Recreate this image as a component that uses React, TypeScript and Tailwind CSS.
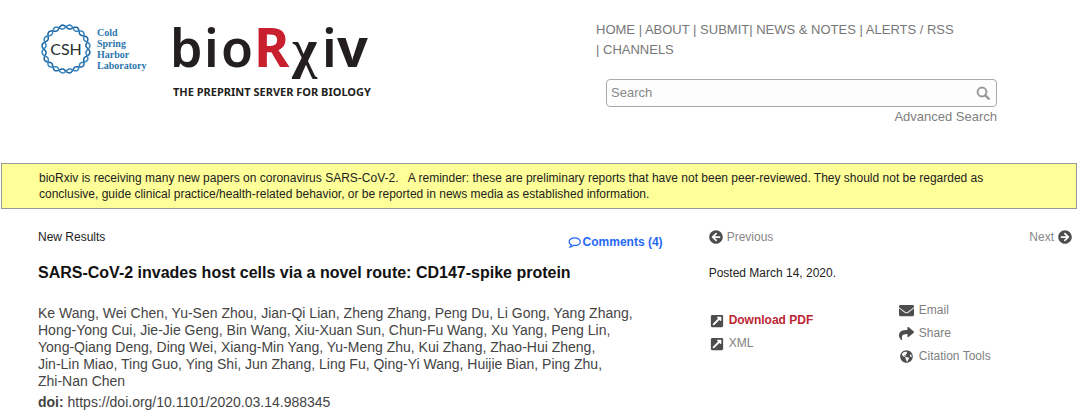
import type { ReactNode } from "react";
import {
  FaArrowCircleLeft,
  FaArrowCircleRight,
  FaEnvelope,
  FaExternalLinkSquareAlt,
  FaGlobeAmericas,
  FaShare,
} from "react-icons/fa";

const navItems = ["HOME", "ABOUT", "SUBMIT", "NEWS & NOTES", "ALERTS / RSS", "CHANNELS"];

const authors = [
  "Ke Wang", "Wei Chen", "Yu-Sen Zhou", "Jian-Qi Lian", "Zheng Zhang", "Peng Du", "Li Gong", "Yang Zhang",
  "Hong-Yong Cui", "Jie-Jie Geng", "Bin Wang", "Xiu-Xuan Sun", "Chun-Fu Wang", "Xu Yang", "Peng Lin",
  "Yong-Qiang Deng", "Ding Wei", "Xiang-Min Yang", "Yu-Meng Zhu", "Kui Zhang", "Zhao-Hui Zheng",
  "Jin-Lin Miao", "Ting Guo", "Ying Shi", "Jun Zhang", "Ling Fu", "Qing-Yi Wang", "Huijie Bian", "Ping Zhu",
  "Zhi-Nan Chen",
];

// One strand of the helix ring, a sine wave wrapped around a circle
function strand(phase: number) {
  const points: string[] = [];
  for (let i = 0; i <= 360; i += 2) {
    const a = (i * Math.PI) / 180;
    const r = 22.2 + 2 * Math.sin(10 * a + phase);
    points.push(`${(25 + r * Math.cos(a)).toFixed(2)} ${(25 + r * Math.sin(a)).toFixed(2)}`);
  }
  return `M${points.join("L")}Z`;
}

function LabLogo() {
  return (
    <a href="#cshl" aria-label="Cold Spring Harbor Laboratory" className="block pt-5">
      <svg width="106" height="50" viewBox="0 0 106 50">
        <path d={strand(0)} fill="none" stroke="#1c639f" strokeWidth="1.5" />
        <path d={strand(Math.PI)} fill="none" stroke="#3584bd" strokeWidth="1.5" />
        <text x="25" y="31" textAnchor="middle" fontSize="16" fill="#26302f" className="font-['Lato',sans-serif]">
          CSH
        </text>
        <g fontSize="10" fontWeight="700" fill="#2c76ad" className="font-['Liberation_Serif',serif]">
          <text x="56" y="12">Cold</text>
          <text x="56" y="23">Spring</text>
          <text x="56" y="34">Harbor</text>
          <text x="56" y="45">Laboratory</text>
        </g>
      </svg>
    </a>
  );
}

function SiteLogo() {
  return (
    <a href="#home" aria-label="bioRxiv home" className="block">
      <svg width="210" height="100" viewBox="0 0 210 100">
        <g fontSize="52" fontWeight="600" fill="#231f20" className="font-['Noto_Sans',sans-serif]">
          <text x="1" y="63">b</text>
          <text x="35" y="63">i</text>
          <text x="52" y="63">o</text>
          <text x="85" y="63" fill="#c8202f" fontSize="54" fontWeight="700">R</text>
          <text x="153" y="63">i</text>
          <text x="168" y="63" fontSize="54" fontWeight="700">v</text>
        </g>
        <text x="123" y="63" fontSize="54" fontWeight="700" fill="#231f20" className="font-['Liberation_Serif',serif]">
          χ
        </text>
        <text x="4" y="92" fontSize="11" fontWeight="700" fill="#231f20" className="font-['Noto_Sans',sans-serif]">
          THE PREPRINT SERVER FOR BIOLOGY
        </text>
      </svg>
    </a>
  );
}

function CommentIcon() {
  return (
    <svg width="13" height="13" viewBox="0 0 14 14" fill="none" stroke="currentColor" strokeWidth="1.4">
      <path d="M7.2 2C3.8 2 1.2 3.7 1.2 6.1c0 1.5 1 2.7 2.5 3.5-.2.9-.7 1.6-1.3 2.2 1.4-.2 2.5-.8 3.4-1.7.4.1.9.1 1.4.1 3.4 0 6-1.7 6-4.1S10.6 2 7.2 2Z" />
    </svg>
  );
}

function SearchIcon() {
  return (
    <svg width="14" height="14" viewBox="0 0 14 14" fill="none" stroke="currentColor">
      <circle cx="6" cy="6" r="4.4" strokeWidth="2" />
      <path d="m9.3 9.3 3.4 3.4" strokeWidth="2.4" strokeLinecap="round" />
    </svg>
  );
}

function ToolLink({ icon, children, href, strong }: { icon: ReactNode; children: ReactNode; href: string; strong?: boolean }) {
  return (
    <li>
      <a href={href} className="flex items-center gap-1">
        <span className="flex w-4 justify-center text-[#4d4d4d]">{icon}</span>
        <span className={strong ? "font-bold text-[#bc2635]" : "text-[#808080]"}>{children}</span>
      </a>
    </li>
  );
}

export default function App() {
  return (
    <div className="bg-white font-['Liberation_Sans',Arial,sans-serif] text-xs text-[#222]">
      <header className="flex justify-between pt-1 pr-[83px] pb-9 pl-[41px]">
        <div className="flex gap-[22px]">
          <LabLogo />
          <SiteLogo />
        </div>
        <div className="w-full max-w-[401px] pt-4">
          <nav className="text-[13px] leading-5 text-[#777]">
            {navItems.map((item, i) => (
              <span key={item}>
                <span className="whitespace-nowrap">
                  {i > 0 && "| "}
                  <a href="#nav">{item}</a>
                </span>
                {item !== "SUBMIT" && " "}
              </span>
            ))}
          </nav>
          <form role="search" className="mt-[19px] ml-[10px]" onSubmit={(e) => e.preventDefault()}>
            <div className="flex h-7 items-center rounded border border-[#aaa] bg-[#fdfdfd] pr-1.5 pl-1">
              <input
                type="text"
                aria-label="Search"
                placeholder="Search"
                className="min-w-0 flex-1 text-[13px] outline-none placeholder:text-[#888]"
              />
              <button type="submit" aria-label="Submit search" className="text-[#999]">
                <SearchIcon />
              </button>
            </div>
            <a href="#advanced" className="block text-right text-[13px] leading-5 text-[#808080]">
              Advanced Search
            </a>
          </form>
        </div>
      </header>

      <p className="mr-[3px] ml-px border border-[#999] bg-[#ffff99] py-[6px] pr-[50px] pl-[37px] leading-4">
        bioRxiv is receiving many new papers on coronavirus SARS-CoV-2. &nbsp; A reminder: these are preliminary
        reports that have not been peer-reviewed. They should not be regarded as conclusive, guide clinical
        practice/health-related behavior, or be reported in news media as established information.
      </p>

      <div className="flex gap-[46px] pt-5 pr-2 pl-[38px]">
        <main className="min-w-0 flex-[624]">
          <div className="flex justify-between">
            <span className="leading-4">New Results</span>
            <a href="#comments" className="mt-1 flex items-center gap-0.5 leading-[18px] font-bold text-[#1f69f5]">
              <CommentIcon />
              Comments (4)
            </a>
          </div>
          <h1 className="mt-[10px] text-base leading-6 font-bold text-[#111]">
            SARS-CoV-2 invades host cells via a novel route: CD147-spike protein
          </h1>
          <p className="mt-5 pr-4 text-sm leading-[17px] text-[#444]">
            {authors.map((name, i) => (
              <span key={name}>
                <span className="whitespace-nowrap">
                  {name}
                  {i < authors.length - 1 && ","}
                </span>{" "}
              </span>
            ))}
          </p>
          <p className="mt-1 text-sm leading-[17px] text-[#444]">
            <strong>doi:</strong> <a href="#doi">https://doi.org/10.1101/2020.03.14.988345</a>
          </p>
        </main>

        <aside className="min-w-0 flex-[363]">
          <nav className="flex justify-between leading-4 text-[#888]">
            <a href="#previous" className="flex items-center gap-1">
              <FaArrowCircleLeft size={14} color="#4d4d4d" />
              Previous
            </a>
            <a href="#next" className="flex items-center gap-1">
              Next
              <FaArrowCircleRight size={14} color="#4d4d4d" />
            </a>
          </nav>
          <p className="mt-5 leading-4">Posted March 14, 2020.</p>
          <div className="mt-[18px] flex">
            <ul className="mt-[10px] flex-[190] leading-[23px]">
              <ToolLink href="#pdf" icon={<FaExternalLinkSquareAlt size={14} />} strong>Download PDF</ToolLink>
              <ToolLink href="#xml" icon={<FaExternalLinkSquareAlt size={14} />}>XML</ToolLink>
            </ul>
            <ul className="flex-[173] leading-[23px]">
              <ToolLink href="#email" icon={<FaEnvelope size={15} />}>Email</ToolLink>
              <ToolLink href="#share" icon={<FaShare size={15} />}>Share</ToolLink>
              <ToolLink href="#citation" icon={<FaGlobeAmericas size={13} />}>Citation Tools</ToolLink>
            </ul>
          </div>
        </aside>
      </div>
    </div>
  );
}
